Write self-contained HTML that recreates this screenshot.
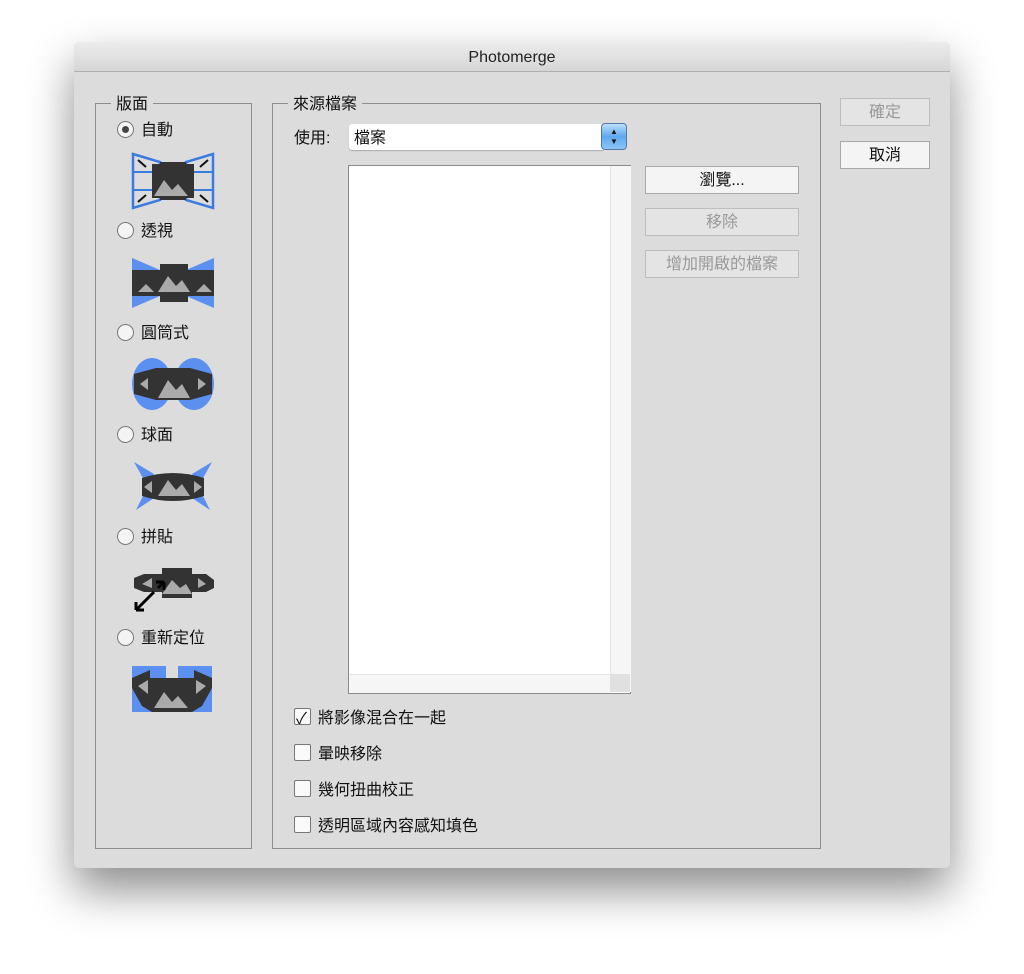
<!DOCTYPE html>
<html><head><meta charset="utf-8"><style>
body{margin:0;width:1024px;height:974px;background:#fff;position:relative;overflow:hidden;font-family:"Liberation Sans","Noto Sans CJK TC",sans-serif;font-size:15px;color:#111}
.win{position:absolute;left:74px;top:42px;width:876px;height:826px;background:#dcdcdc;border-radius:5px;box-shadow:0 22px 45px rgba(0,0,0,.45);overflow:hidden}
.title{height:29px;background:linear-gradient(#ececec,#d6d6d6);border-bottom:1px solid #b0b0b0;text-align:center;line-height:31px;font-size:16px;color:#222}
.a{position:absolute}
.grp{position:absolute;border:1px solid #8e8e8e}
.lg{position:absolute;background:#dcdcdc;padding:0 5px;font-size:16px;line-height:18px}
.radio{position:absolute;width:15px;height:15px;border:1px solid #777;border-radius:50%;background:#f4f4f4}
.lbl{position:absolute;font-size:16px;line-height:18px}
.cb{position:absolute;width:15px;height:15px;border:1px solid #777;background:#fafafa;border-radius:2px}
.btn{position:absolute;height:26px;border:1px solid #a8a8a8;background:#f4f4f4;text-align:center;line-height:28px;font-size:16px}
.dis{background:#e4e4e4;color:#999;border-color:#bdbdbd}
</style></head><body>
<div class="win">
<div class="title">Photomerge</div>
</div>
<div class="grp" style="left:95px;top:103px;width:155px;height:744px"></div>
<div class="lg" style="left:111px;top:96px">版面</div>
<div class="radio" style="left:117px;top:121px"><div style="position:absolute;left:4px;top:4px;width:7px;height:7px;border-radius:50%;background:#444"></div></div>
<div class="lbl" style="left:141px;top:122px">自動</div>
<div class="radio" style="left:117px;top:222px"></div><div class="lbl" style="left:141px;top:223px">透視</div>
<div class="radio" style="left:117px;top:324px"></div><div class="lbl" style="left:141px;top:325px">圓筒式</div>
<div class="radio" style="left:117px;top:426px"></div><div class="lbl" style="left:141px;top:427px">球面</div>
<div class="radio" style="left:117px;top:528px"></div><div class="lbl" style="left:141px;top:529px">拼貼</div>
<div class="radio" style="left:117px;top:629px"></div><div class="lbl" style="left:141px;top:630px">重新定位</div>
<svg class="a" style="left:130px;top:150px" width="86" height="62" viewBox="0 0 86 62">
<path d="M3 4L30 12V50L3 58Z M83 4L56 12V50L83 58Z" fill="#dcdcdc" stroke="#3a7be0" stroke-width="2.5"/>
<path d="M3 22H30M3 40H30M56 22H83M56 40H83" stroke="#3a7be0" stroke-width="2"/>
<rect x="30" y="12" width="26" height="38" fill="#333"/><rect x="22" y="14" width="42" height="34" fill="#333"/>
<path d="M24 46L34 30L42 40L48 34L58 46Z" fill="#aaa"/>
<path d="M8 10l8 7M8 52l8-7M78 10l-8 7M78 52l-8-7" stroke="#111" stroke-width="2"/>
</svg>
<svg class="a" style="left:130px;top:256px" width="86" height="54" viewBox="0 0 86 54">
<path d="M2 2L30 14V40L2 52Z M84 2L56 14V40L84 52Z" fill="#5b8ff0"/>
<rect x="2" y="14" width="82" height="26" fill="#333"/><rect x="30" y="8" width="28" height="38" fill="#333"/>
<path d="M8 36l8-8 8 8Z M28 36l10-16 8 10 6-6 8 12Z M66 36l8-8 8 8Z" fill="#aaa"/>
</svg>
<svg class="a" style="left:132px;top:358px" width="82" height="52" viewBox="0 0 82 52">
<ellipse cx="20" cy="26" rx="20" ry="26" fill="#5b8ff0"/><ellipse cx="62" cy="26" rx="20" ry="26" fill="#5b8ff0"/>
<path d="M2 16L24 10H58L80 16V36L58 42H24L2 36Z" fill="#333"/>
<path d="M8 26l8-6v12Z M74 26l-8-6v12Z M26 40l10-18 8 10 6-6 8 14Z" fill="#aaa"/>
</svg>
<svg class="a" style="left:132px;top:460px" width="82" height="52" viewBox="0 0 82 52">
<path d="M2 2L22 14 4 50 22 38Z M80 2L60 14 78 50 60 38Z" fill="#5b8ff0"/>
<path d="M10 18Q41 8 72 18V36Q41 46 10 36Z" fill="#333"/>
<path d="M12 27l8-6v12Z M70 27l-8-6v12Z M26 36l10-16 8 10 6-6 8 12Z" fill="#aaa"/>
</svg>
<svg class="a" style="left:132px;top:566px" width="84" height="48" viewBox="0 0 84 48">
<path d="M2 12L12 8H30V2H60V8H74L82 14V22L74 26H60V32H30V26H12L2 22Z" fill="#333"/>
<path d="M10 18l10-6v10Z M74 18l-8-6v10Z M30 28l10-14 8 8 6-4 6 10Z" fill="#aaa"/>
<path d="M4 44L22 26M4 44v-8M4 44h8M26 22L32 16M32 16v8M32 16h-8" stroke="#000" stroke-width="3" fill="none"/>
</svg>
<svg class="a" style="left:132px;top:666px" width="80" height="46" viewBox="0 0 80 46">
<rect width="80" height="46" fill="#5b8ff0"/><rect x="34" y="0" width="12" height="12" fill="#dcdcdc"/>
<path d="M0 12L18 4V12H62V4L80 12V22L70 40L60 46H20L10 40L0 22Z" fill="#333"/>
<path d="M6 20l10-6v14Z M74 20l-10-6v14Z M22 42l10-16 8 10 6-6 10 12Z" fill="#aaa"/>
</svg>
<div class="grp" style="left:272px;top:103px;width:547px;height:744px"></div>
<div class="lg" style="left:288px;top:96px">來源檔案</div>
<div class="lbl" style="left:294px;top:130px">使用:</div>
<div class="a" style="left:349px;top:124px;width:254px;height:26px;background:#fff;border-radius:3px 0 0 3px;box-shadow:0 1px 1px #aaa"></div>
<div class="lbl" style="left:354px;top:130px">檔案</div>
<div class="a" style="left:601px;top:123px;width:26px;height:27px;border-radius:4px;background:linear-gradient(#bde0fb,#5ea8ee 50%,#8cc6f8);border:1px solid #5577aa;text-align:center;font-size:8px;line-height:10px;padding-top:3px;box-sizing:border-box">▲<br>▼</div>
<div class="a" style="left:348px;top:165px;width:281px;height:527px;background:#fff;border:1px solid #8a8a8a"></div>
<div class="a" style="left:610px;top:166px;width:20px;height:526px;background:#f6f6f6;border-left:1px solid #e4e4e4"></div>
<div class="a" style="left:349px;top:674px;width:261px;height:18px;background:#f6f6f6;border-top:1px solid #e4e4e4"></div>
<div class="a" style="left:610px;top:674px;width:20px;height:18px;background:#e0e0e0"></div>
<div class="btn" style="left:645px;top:166px;width:152px">瀏覽...</div>
<div class="btn dis" style="left:645px;top:208px;width:152px">移除</div>
<div class="btn dis" style="left:645px;top:250px;width:152px">增加開啟的檔案</div>
<div class="cb" style="left:294px;top:708px"><span style="position:absolute;left:1px;top:-4px;font-size:16px">✓</span></div><div class="lbl" style="left:318px;top:710px">將影像混合在一起</div>
<div class="cb" style="left:294px;top:744px"></div><div class="lbl" style="left:318px;top:746px">暈映移除</div>
<div class="cb" style="left:294px;top:780px"></div><div class="lbl" style="left:318px;top:782px">幾何扭曲校正</div>
<div class="cb" style="left:294px;top:816px"></div><div class="lbl" style="left:318px;top:818px">透明區域內容感知填色</div>
<div class="btn dis" style="left:840px;top:98px;width:88px">確定</div>
<div class="btn" style="left:840px;top:141px;width:88px">取消</div>
</body></html>
